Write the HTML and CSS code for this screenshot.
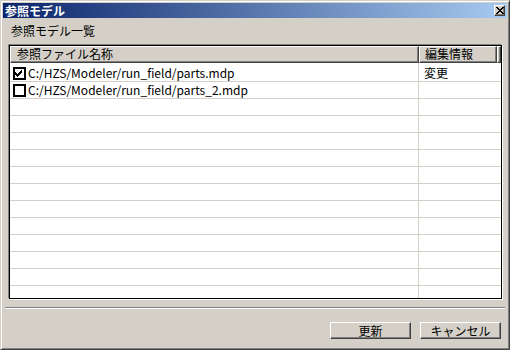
FILE: index.html
```html
<!DOCTYPE html>
<html lang="ja">
<head>
<meta charset="utf-8">
<link rel="stylesheet" href="styles.css">
</head>
<body>
<div class="window">
  <div class="titlebar">
    <span class="title">参照モデル</span>
    <span class="close"><svg width="8" height="7" viewBox="0 0 8 7"><path d="M0 0h2v1h1v1h2v-1h1v-1h2v1h-1v1h-1v1h-1v1h1v1h1v1h1v1h-2v-1h-1v-1h-2v1h-1v1h-2v-1h1v-1h1v-1h1v-1h-1v-1h-1v-1h-1z" fill="#000"/></svg></span>
  </div>
  <div class="content">
    <div class="label">参照モデル一覧</div>
    <div class="list">
      <div class="header">
        <div class="hcell c1">参照ファイル名称</div>
        <div class="hcell c2">編集情報</div>
        <div class="hcell c3"></div>
      </div>
      <div class="rows">
        <div class="row first"><div class="cell c1"><span class="cb checked"><svg width="9" height="7" viewBox="0 0 9 7"><path d="M0 2h1v1h1v1h1v-1h1v-1h1v-1h1v-1h1v3h-1v1h-1v1h-1v1h-1v1h-1v-1h-1v-1h-1z" fill="#000"/></svg></span><span class="path">C:/HZS/Modeler/run_field/parts.mdp</span></div><div class="cell c2">変更</div></div>
        <div class="row"><div class="cell c1"><span class="cb"></span><span class="path">C:/HZS/Modeler/run_field/parts_2.mdp</span></div><div class="cell c2"></div></div>
        <div class="row"><div class="cell c1"></div><div class="cell c2"></div></div>
        <div class="row"><div class="cell c1"></div><div class="cell c2"></div></div>
        <div class="row"><div class="cell c1"></div><div class="cell c2"></div></div>
        <div class="row"><div class="cell c1"></div><div class="cell c2"></div></div>
        <div class="row"><div class="cell c1"></div><div class="cell c2"></div></div>
        <div class="row"><div class="cell c1"></div><div class="cell c2"></div></div>
        <div class="row"><div class="cell c1"></div><div class="cell c2"></div></div>
        <div class="row"><div class="cell c1"></div><div class="cell c2"></div></div>
        <div class="row"><div class="cell c1"></div><div class="cell c2"></div></div>
        <div class="row"><div class="cell c1"></div><div class="cell c2"></div></div>
        <div class="row"><div class="cell c1"></div><div class="cell c2"></div></div>
        <div class="row"><div class="cell c1"></div><div class="cell c2"></div></div>
        <div class="row"><div class="cell c1"></div><div class="cell c2"></div></div>
      </div>
    </div>
    <div class="separator"></div>
    <div class="buttons">
      <button class="btn">更新</button>
      <button class="btn">キャンセル</button>
    </div>
  </div>
</div>
</body>
</html>
```
FILE: styles.css
```css
html, body {
  margin: 0;
  padding: 0;
  background: #d4d0c8;
}
body {
  font-family: "Noto Sans CJK JP", "Liberation Sans", sans-serif;
  font-size: 12px;
  color: #000;
}
.window {
  width: 510px;
  height: 350px;
  box-sizing: border-box;
  border: 1px solid;
  border-color: #d4d0c8 #404040 #404040 #d4d0c8;
  box-shadow: inset 1px 1px 0 #fff, inset -1px -1px 0 #808080;
  padding: 2px;
  background: #d4d0c8;
  display: flex;
  flex-direction: column;
}
.titlebar {
  height: 15px;
  background: linear-gradient(to right, #0a246a, #a6caf0);
  display: flex;
  align-items: center;
  justify-content: space-between;
  padding: 0 2px 0 2px;
}
.title {
  color: #fff;
  font-weight: bold;
  font-size: 12px;
  line-height: 15px;
}
.close {
  width: 11px;
  height: 11px;
  box-sizing: border-box;
  background: #d4d0c8;
  border: 1px solid;
  border-color: #fff #404040 #404040 #fff;
  box-shadow: inset -1px -1px 0 #808080;
  display: flex;
  align-items: center;
  justify-content: center;
}
.close svg { display: block; }
.content {
  flex: 1;
  display: flex;
  flex-direction: column;
  padding: 0 2px 0 2px;
}
.label {
  padding-left: 6px;
  margin-top: 5px;
  height: 16px;
  line-height: 16px;
}
.list {
  margin: 6px 0 0 4px;
  width: 493px;
  height: 254px;
  box-sizing: border-box;
  border: 1px solid #000;
  box-shadow: -1px -1px 0 #808080, 1px 1px 0 #fff;
  background: #fff;
  overflow: hidden;
}
.header {
  display: flex;
  height: 17px;
  background: #d4d0c8;
}
.hcell {
  box-sizing: border-box;
  height: 17px;
  border: 1px solid;
  border-color: #fff #404040 #404040 #fff;
  box-shadow: inset -1px -1px 0 #808080;
  line-height: 14px;
  padding-left: 6px;
  white-space: nowrap;
}
.c1 { width: 409px; }
.c2 { width: 78px; }
.hcell.c2 { padding-left: 5px; }
.hcell.c3 { width: 4px; padding: 0; }
.row {
  display: flex;
  height: 17px;
  box-sizing: border-box;
  border-bottom: 1px solid #d4d0c8;
}
.row.first {
  height: 19px;
}
.cell {
  box-sizing: border-box;
  height: 100%;
  line-height: 16px;
  white-space: nowrap;
  display: flex;
  align-items: flex-end;
}
.cell.c1 {
  width: 409px;
  border-right: 1px solid #d4d0c8;
  padding-left: 3px;
}
.cell.c2 {
  padding-left: 5px;
}
.cb {
  width: 13px;
  height: 13px;
  box-sizing: border-box;
  border: 2px solid #000;
  background: #fff;
  display: flex;
  align-items: center;
  justify-content: center;
  margin-right: 2px;
  margin-bottom: 1px;
  align-self: flex-end;
}
.cb svg { display: block; }
.separator {
  margin-top: 8px;
  height: 1px;
  background: #808080;
  border-bottom: 1px solid #fff;
}
.buttons {
  display: flex;
  justify-content: flex-end;
  gap: 9px;
  margin-top: 13px;
  padding-right: 4px;
}
.btn {
  width: 81px;
  height: 17px;
  box-sizing: border-box;
  background: #d4d0c8;
  border: 1px solid;
  border-color: #fff #404040 #404040 #fff;
  box-shadow: inset -1px -1px 0 #808080;
  font-family: "Noto Sans CJK JP", "Liberation Sans", sans-serif;
  font-size: 12px;
  line-height: 14px;
  padding: 0;
  color: #000;
}
```
